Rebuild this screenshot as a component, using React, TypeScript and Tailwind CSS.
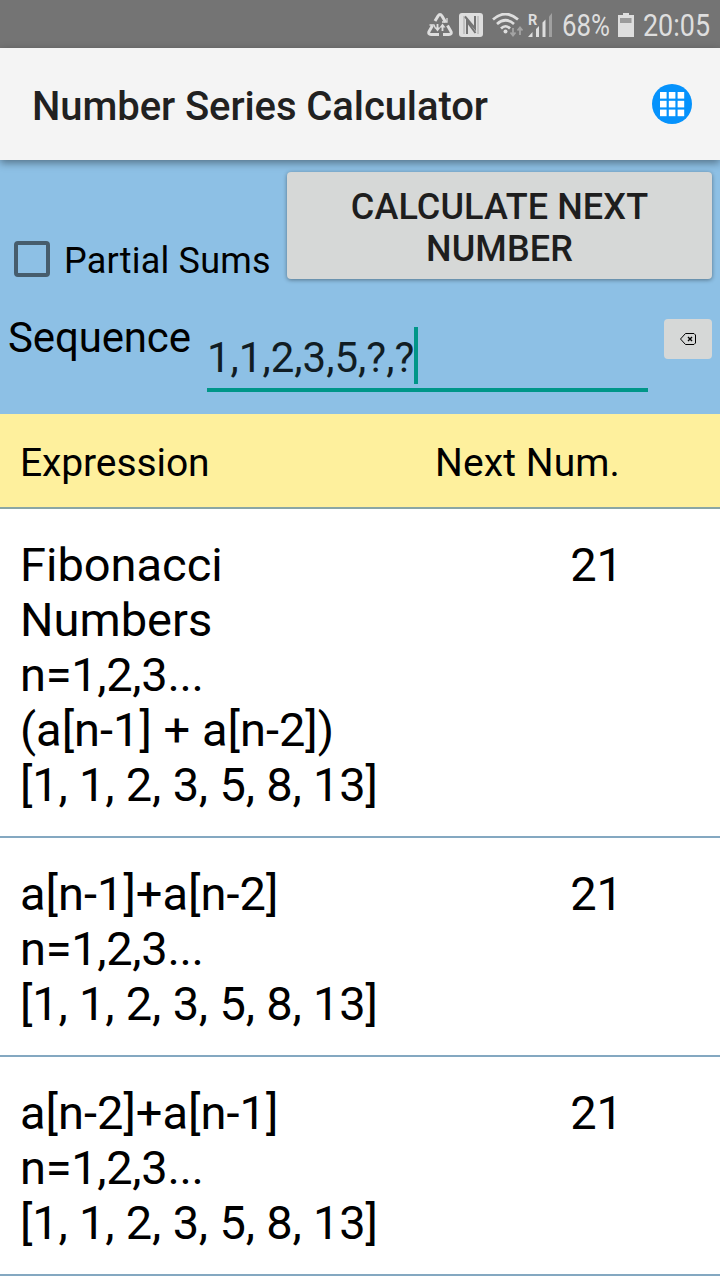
import { useState } from "react";
import clsx from "clsx";

interface Result {
  name: string;
  lines: string[];
  next: number;
}

const SERIES = "[1, 1, 2, 3, 5, 8, 13]";

const results: Result[] = [
  { name: "Fibonacci Numbers", lines: ["n=1,2,3...", "(a[n-1] + a[n-2])", SERIES], next: 21 },
  { name: "a[n-1]+a[n-2]", lines: ["n=1,2,3...", SERIES], next: 21 },
  { name: "a[n-2]+a[n-1]", lines: ["n=1,2,3...", SERIES], next: 21 },
];

export default function App() {
  const [partialSums, setPartialSums] = useState(false);
  const [sequence, setSequence] = useState("1,1,2,3,5,?,?");

  return (
    <div className="flex h-[1280px] w-[720px] flex-col overflow-hidden bg-white font-['Roboto',sans-serif] text-black">
      <StatusBar />

      <header className="z-10 flex h-28 shrink-0 items-center justify-between bg-[#f4f4f4] pl-8 pr-7 shadow-[0_3px_8px_rgba(0,0,0,0.4)]">
        <h1 className="pt-1.5 text-[40px] leading-[48px] font-medium tracking-[-0.08px] whitespace-nowrap text-[#212121]">
          Number Series Calculator
        </h1>
        <GridIcon />
      </header>

      {/* Input form */}
      <section className="flex h-[254px] shrink-0 flex-col bg-[#8dc0e5] pt-3">
        <div className="flex pr-2">
          <button
            className="mt-[69px] flex h-9 w-[287px] items-center pl-3.5 text-left"
            onClick={() => setPartialSums(!partialSums)}
          >
            <span className="flex size-9 shrink-0 items-center justify-center rounded-[4px] border-4 border-[#465d6d]">
              {partialSums && <span className="size-5 bg-[#009688]" />}
            </span>
            <span className="pt-1 pl-3.5 text-[36px] leading-10 tracking-[0.2px] whitespace-nowrap">Partial Sums</span>
          </button>
          <button className="h-[107px] flex-1 rounded-[4px] bg-[#d6d8d7] px-10 pt-1 text-center text-[36px] leading-[42px] font-medium tracking-[0.1px] text-[#1e1e1e] shadow-[0_1px_4px_rgba(0,0,0,0.4)]">
            CALCULATE NEXT NUMBER
          </button>
        </div>

        <div className="mt-10 flex items-start pr-2 pl-2">
          <span className="w-[199px] text-[42px] leading-[38px] tracking-[-0.15px]">Sequence</span>
          <div className="mt-2 flex h-[65px] w-[441px] items-start border-b-4 border-[#009688]">
            <span className="text-[42px] leading-[62px] text-[#111d24]">{sequence}</span>
            <span className="h-[57px] w-1 bg-[#009688]" />
          </div>
          <button
            className="ml-4 flex h-10 w-12 items-center justify-center rounded-[4px] bg-[#d6d8d7]"
            onClick={() => setSequence(sequence.slice(0, -1))}
          >
            <BackspaceIcon />
          </button>
        </div>
      </section>

      {/* Results */}
      <div className="flex h-[95px] shrink-0 items-center border-b-2 border-[#8aa6a5] bg-[#fef09d] pt-1 pl-5 text-[39px] leading-[48px]">
        <span className="w-[415px] tracking-[-0.1px]">Expression</span>
        <span className="tracking-[0.1px]">Next Num.</span>
      </div>
      {results.map((r) => (
        <ResultRow key={r.name} result={r} />
      ))}
    </div>
  );
}

function ResultRow({ result }: { result: Result }) {
  return (
    <div className="flex shrink-0 border-b-2 border-[#84a8c1] pt-7 pb-6 pl-5 text-[47px] leading-[55px]">
      <div className="w-[380px]">
        <p className="w-[300px]">{result.name}</p>
        {result.lines.map((line) => (
          <p
            key={line}
            className={clsx(
              "whitespace-nowrap",
              line.startsWith("n=") && "tracking-[-0.3px]",
              line.startsWith("[") && "tracking-[-0.18px]",
            )}
          >
            {line}
          </p>
        ))}
      </div>
      <span className="w-[223px] text-right">{result.next}</span>
    </div>
  );
}

function StatusBar() {
  return (
    <div className="flex h-12 shrink-0 items-center justify-end bg-[#747474] pt-0.5 pr-2.5 text-[#dedede]">
      {/* data saver */}
      <svg className="mr-[6px] h-6 w-[26px]" viewBox="0 0 26 24" fill="none" stroke="currentColor">
        <path
          d="M8 8 11 3Q13 0 15 3L18.500 9M20.500 12.500 24 18.500Q25 21.500 22 21.500H16M12 21.500H4Q1 21.500 2 18.500L5.500 12.500"
          strokeWidth="3"
        />
        <path d="M15 9h5V5M2.500 12h4.500l1.500 3.500" strokeWidth="1.300" />
        <path d="M10.500 11V16M15.500 18v-5" strokeWidth="1.800" />
        <path d="M7.500 14.500h6l-3 4ZM12.500 14.500h6l-3-4Z" fill="currentColor" stroke="none" />
      </svg>
      {/* NFC */}
      <svg className="mr-[9px] size-6" viewBox="0 0 24 24">
        <rect width="24" height="24" rx="3" fill="currentColor" />
        <path d="M8 21V8.500L16.500 20M16 3V15.500L6 3.500" fill="none" stroke="#747474" strokeWidth="2" />
        <path d="M5 3v18M19 3v18" stroke="#9a9a9a" strokeWidth=".8" />
      </svg>
      {/* wifi */}
      <svg className="mr-[4px] h-6 w-8" viewBox="0 0 32 24" fill="none" stroke="currentColor" strokeWidth="2.700">
        <path d="M1 6.500Q13.500-4.500 26 6.500M5 11Q13.500 3.500 22 11M9 15.500Q13.500 11 18 15.500" />
        <circle cx="13.500" cy="18.500" r="2" fill="currentColor" stroke="none" />
        <path d="M21 15v7M18.500 19.500l2.500 3 2.500-3M28 22v-7M25.500 17.500l2.500-3 2.500 3" stroke="#a4a4a4" strokeWidth="1.800" />
      </svg>
      {/* signal */}
      <svg className="mr-[10px] h-6 w-6" viewBox="0 0 24 24" fill="currentColor">
        <path d="M0 24 4.500 19v5ZM8 16l3-3v11H8ZM14.500 9.500l3-3V24h-3Z" />
        <path d="M21 3.500 24 0v24h-3Z" fill="#a0a0a0" />
        <text x="0" y="11.500" fontSize="14.500" fontWeight="700" fontFamily="Roboto">R</text>
      </svg>
      <Condensed text="68%" width={48} />
      <svg className="mr-[9px] ml-[8px] h-6 w-4" viewBox="0 0 16 24">
        <path d="M5 0h6v2h5v22H0V2h5Z" fill="currentColor" />
        <path d="M2 5h11.500v5H2Z" fill="#9b9b9b" />
      </svg>
      <Condensed text="20:05" width={67} />
    </div>
  );
}

// Squeezes the regular face to the width of the status bar's condensed one
function Condensed({ text, width }: { text: string; width: number }) {
  return (
    <svg className="h-8 overflow-visible" style={{ width }} viewBox={`0 0 ${width} 32`}>
      <text x="0" y="27" fontSize="31" fontFamily="Roboto" fill="currentColor" textLength={width} lengthAdjust="spacingAndGlyphs">
        {text}
      </text>
    </svg>
  );
}

function GridIcon() {
  const offsets = [8, 16.8, 25.6];
  return (
    <svg className="size-10" viewBox="0 0 40 40">
      <circle cx="20" cy="20" r="20" fill="#0592fc" />
      {offsets.map((y) =>
        offsets.map((x) => <rect key={`${x}-${y}`} x={x} y={y} width="6.600" height="6.600" fill="#fff" />),
      )}
    </svg>
  );
}

function BackspaceIcon() {
  return (
    <svg className="h-3 w-4" viewBox="0 0 16 12" fill="none" stroke="#000">
      <path d="M5.500.5H14l1.500 1.500V10L14 11.500H5.500L.5 6Z" />
      <path d="m8 4 4 4M12 4 8 8" strokeWidth="1.400" />
    </svg>
  );
}
